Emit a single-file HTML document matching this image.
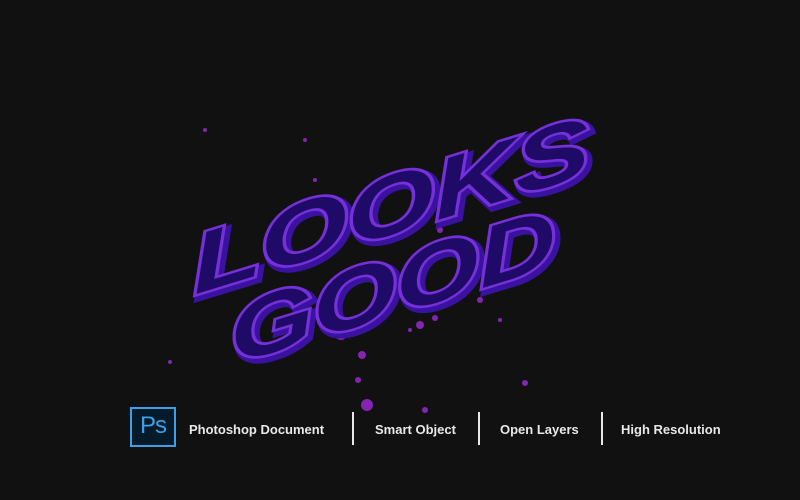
<!DOCTYPE html>
<html><head><meta charset="utf-8"><style>
html,body{margin:0;padding:0;background:#121112;}
body{width:800px;height:500px;position:relative;overflow:hidden;font-family:"Liberation Sans",sans-serif;}
.ps{position:absolute;left:130px;top:407px;width:46px;height:40px;border:2px solid #3d9fe8;background:#061b2a;box-sizing:border-box;color:#3d9fe8;font-size:24px;line-height:34px;text-align:center;letter-spacing:-1px;}
.t{position:absolute;top:422px;color:#e8e8e8;font-size:13px;font-weight:bold;}
.bar{position:absolute;top:412px;width:2px;height:33px;background:#e8e8e8;}
</style></head><body>
<svg width="800" height="500" style="position:absolute;left:0;top:0">
<g fill="#a02ad8" opacity="0.8">
<circle cx="341" cy="334" r="6"/><circle cx="362" cy="355" r="4"/><circle cx="367" cy="405" r="6"/><circle cx="358" cy="380" r="3"/><circle cx="420" cy="325" r="4"/><circle cx="435" cy="318" r="3"/><circle cx="410" cy="330" r="2"/><circle cx="480" cy="300" r="3"/><circle cx="500" cy="320" r="2"/><circle cx="525" cy="383" r="3"/><circle cx="425" cy="410" r="3"/><circle cx="305" cy="140" r="2"/><circle cx="315" cy="180" r="2"/><circle cx="440" cy="230" r="3"/><circle cx="205" cy="130" r="2"/><circle cx="170" cy="362" r="2"/><circle cx="540" cy="250" r="2"/><circle cx="450" cy="300" r="2"/><circle cx="390" cy="300" r="2"/>
</g>
<g transform="translate(394,244) rotate(-17) skewX(-12)" font-family="Liberation Sans" font-weight="bold" font-style="italic" text-anchor="middle">
<text x="3" y="-6" font-size="82" textLength="415" lengthAdjust="spacingAndGlyphs" fill="#3a12a0" stroke="#3a12a0" stroke-width="8">LOOKS</text>
<text x="0" y="-10" font-size="82" textLength="415" lengthAdjust="spacingAndGlyphs" fill="#1f0a68" stroke="#7530d8" stroke-width="5" paint-order="stroke">LOOKS</text>
<text x="-2" y="72" font-size="82" textLength="340" lengthAdjust="spacingAndGlyphs" fill="#3a12a0" stroke="#3a12a0" stroke-width="8">GOOD</text>
<text x="-5" y="68" font-size="82" textLength="340" lengthAdjust="spacingAndGlyphs" fill="#1f0a68" stroke="#7530d8" stroke-width="5" paint-order="stroke">GOOD</text>
</g>
</svg>
<div class="ps">Ps</div>
<div class="t" style="left:189px">Photoshop Document</div>
<div class="bar" style="left:352px"></div>
<div class="t" style="left:375px">Smart Object</div>
<div class="bar" style="left:478px"></div>
<div class="t" style="left:500px">Open Layers</div>
<div class="bar" style="left:601px"></div>
<div class="t" style="left:621px">High Resolution</div>
</body></html>
